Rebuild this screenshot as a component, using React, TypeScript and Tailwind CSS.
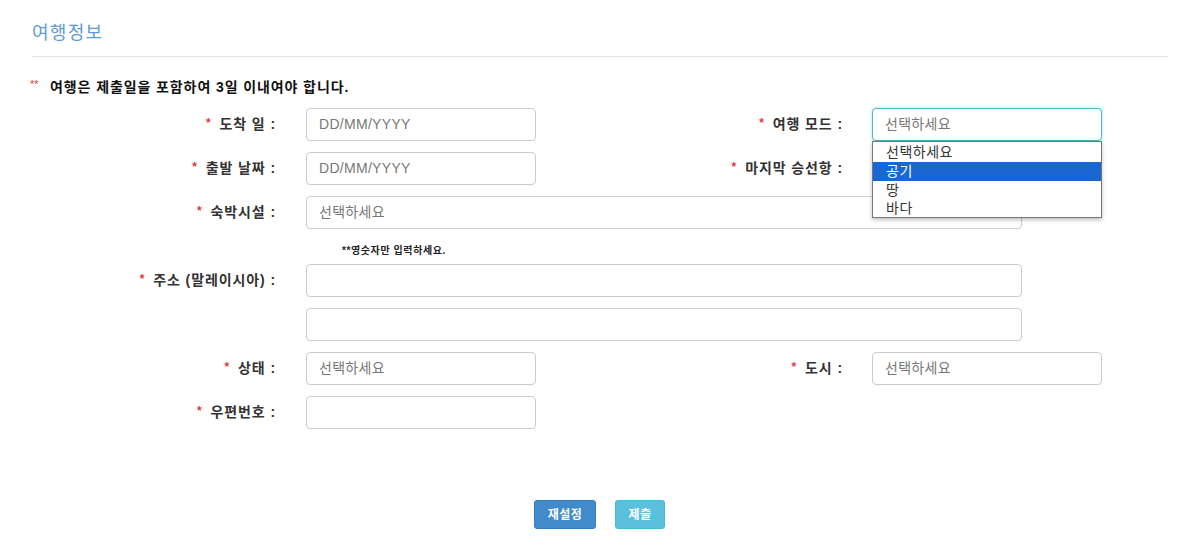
import React from "react";

const font = { fontFamily: '"Liberation Sans", "Noto Sans CJK KR", sans-serif' };

function Label({ text, w }: { text: string; w: string }) {
  return (
    <div className={`${w} shrink-0 flex items-center justify-end text-[14px] font-bold text-[#333] tracking-[0.9px]`}>
      <span className="text-[#e0393e] text-[12px] mr-[8px] relative top-[-2px]">*</span>
      <span>{text}</span>
    </div>
  );
}

function Field({ w, placeholder, focus }: { w: string; placeholder?: string; focus?: boolean }) {
  return (
    <div
      className={`${w} h-[33px] shrink-0 rounded-[4px] border ${
        focus ? "border-[#4cb8c8] shadow-[0_0_3px_rgba(76,184,200,0.5)]" : "border-[#cccccc]"
      } bg-white flex items-center px-[12px] text-[14px] text-[#777] tracking-[0.3px]`}
    >
      {placeholder}
    </div>
  );
}

export default function App() {
  return (
    <div className="w-[1188px] h-[545px] bg-white relative overflow-hidden" style={font}>
      <div className="ml-[32px] mr-[20px] pt-[20px] h-[57px] border-b border-[#e5e5e5]">
        <div className="text-[18px] leading-[26px] text-[#5b9bd6] tracking-[1.3px]">여행정보</div>
      </div>
      <div className="flex items-center mt-[21px] ml-[30px] h-[18px]">
        <span className="text-[#e0393e] text-[11px] w-[20px] relative top-[-3px]">**</span>
        <span className="text-[14px] font-bold text-[#111] tracking-[0.9px]">여행은 제출일을 포함하여 3일 이내여야 합니다.</span>
      </div>

      <div className="mt-[12px] flex flex-col">
        <div className="flex h-[33px]">
          <Label text="도착 일 :" w="w-[276px]" />
          <div className="w-[30px]" />
          <Field w="w-[230px]" placeholder="DD/MM/YYYY" />
          <Label text="여행 모드 :" w="w-[307px]" />
          <div className="w-[29px]" />
          <div className="relative">
            <Field w="w-[230px]" placeholder="선택하세요" focus />
            <div className="absolute left-0 top-[33px] w-[230px] h-[77px] border border-[#767676] bg-white shadow-[0_2px_4px_rgba(0,0,0,0.25)] z-10 text-[14px] text-[#333] pt-[1px] tracking-[0.5px]">
              <div className="h-[19px] leading-[19px] pl-[13px]">선택하세요</div>
              <div className="h-[19px] leading-[19px] pl-[13px] bg-[#1967d2] text-white">공기</div>
              <div className="h-[18px] leading-[18px] pl-[13px]">땅</div>
              <div className="h-[18px] leading-[18px] pl-[13px]">바다</div>
            </div>
          </div>
        </div>

        <div className="flex h-[33px] mt-[11px]">
          <Label text="출발 날짜 :" w="w-[276px]" />
          <div className="w-[30px]" />
          <Field w="w-[230px]" placeholder="DD/MM/YYYY" />
          <Label text="마지막 승선항 :" w="w-[307px]" />
          <div className="w-[29px]" />
          <Field w="w-[230px]" />
        </div>

        <div className="flex h-[33px] mt-[11px]">
          <Label text="숙박시설 :" w="w-[276px]" />
          <div className="w-[30px]" />
          <Field w="w-[716px]" placeholder="선택하세요" />
        </div>

        <div className="ml-[342px] mt-[16px] h-[12px] leading-[12px] text-[10px] font-bold text-[#222] tracking-[0.6px]">
          **영숫자만 입력하세요.
        </div>

        <div className="flex h-[33px] mt-[7px]">
          <Label text="주소 (말레이시아) :" w="w-[276px]" />
          <div className="w-[30px]" />
          <Field w="w-[716px]" />
        </div>

        <div className="flex h-[33px] mt-[11px]">
          <div className="w-[306px]" />
          <Field w="w-[716px]" />
        </div>

        <div className="flex h-[33px] mt-[11px]">
          <Label text="상태 :" w="w-[276px]" />
          <div className="w-[30px]" />
          <Field w="w-[230px]" placeholder="선택하세요" />
          <Label text="도시 :" w="w-[307px]" />
          <div className="w-[29px]" />
          <Field w="w-[230px]" placeholder="선택하세요" />
        </div>

        <div className="flex h-[33px] mt-[11px]">
          <Label text="우편번호 :" w="w-[276px]" />
          <div className="w-[30px]" />
          <Field w="w-[230px]" />
        </div>
      </div>

      <div className="flex mt-[71px] ml-[534px] gap-[19px]">
        <button className="w-[62px] h-[29px] rounded-[3px] bg-[#428bca] border border-[#357ebd] text-white text-[12px] font-bold tracking-[0.5px]">
          재설정
        </button>
        <button className="w-[50px] h-[29px] rounded-[3px] bg-[#5bc0de] border border-[#46b8da] text-white text-[12px] font-bold tracking-[0.5px]">
          제출
        </button>
      </div>
    </div>
  );
}
